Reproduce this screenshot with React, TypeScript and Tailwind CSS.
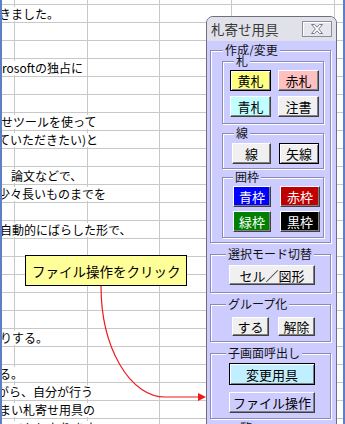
import React from "react";

const FONT = '"Noto Sans CJK JP", "Noto Sans", sans-serif';

type Row = { t?: string; cls?: string };

const rows: Row[] = [
  { t: "きました。", cls: "-ml-[3px]" },
  {},
  {},
  { t: "rosoftの独占に", cls: "ml-0" },
  {},
  {},
  { t: "せツールを使って", cls: "-ml-[1px]" },
  { t: "ていただきたい)と", cls: "-ml-[4px]" },
  {},
  { t: "論文などで、", cls: "ml-[9px]" },
  { t: "少々長いものまでを", cls: "-ml-[4px]" },
  {},
  { t: "自動的にばらした形で、", cls: "-ml-[2px]" },
  {},
  {},
  {},
  {},
  {},
  { t: "りする。", cls: "-ml-[2px]" },
  {},
  { t: "る。", cls: "-ml-[3px]" },
  { t: "がら、自分が行う", cls: "-ml-[5px]" },
  { t: "まい札寄せ用具の", cls: "-ml-[3px]" },
  { t: "ことになります。", cls: "ml-[10px]" },
];

function Cells({ text, cls }: { text?: string; cls?: string }) {
  return (
    <>
      <div className="w-[13px] h-full shrink-0 border-r border-[#c8c8c8] flex items-center">
        {text ? (
          <span
            className={`relative z-10 whitespace-nowrap bg-white text-[12px] leading-[14px] text-black ${cls ?? ""}`}
          >
            {text}
          </span>
        ) : null}
      </div>
      <div className="w-[73px] h-full shrink-0 border-r border-[#c8c8c8]" />
      <div className="w-[72px] h-full shrink-0 border-r border-[#c8c8c8]" />
      <div className="w-[72px] h-full shrink-0 border-r border-[#c8c8c8]" />
      <div className="w-[103px] h-full shrink-0 border-r border-[#c8c8c8]" />
      <div className="flex-1 h-full" />
    </>
  );
}

function Btn({
  children,
  className,
  def,
}: {
  children: React.ReactNode;
  className?: string;
  def?: boolean;
}) {
  const edge = def
    ? "border border-black shadow-[inset_1px_1px_0_#ffffff,inset_-1px_-1px_0_#808080]"
    : "border border-t-white border-l-white border-r-[#404040] border-b-[#404040] shadow-[inset_-1px_-1px_0_#808080]";
  return (
    <div
      className={`flex items-center justify-center text-[13px] leading-[13px] ${edge} ${className ?? ""}`}
    >
      {children}
    </div>
  );
}

function Group({
  label,
  className,
  labelCls,
  children,
}: {
  label: string;
  className?: string;
  labelCls?: string;
  children: React.ReactNode;
}) {
  return (
    <div
      className={`flex flex-col border border-[#8a8ab4] shadow-[inset_1px_1px_0_#ffffff,1px_1px_0_#ffffff] ${className ?? ""}`}
    >
      <span
        className={`-mt-[7px] self-start px-[2px] bg-[#ccccff] text-[12px] leading-[12px] text-[#111] ${labelCls ?? ""}`}
      >
        {label}
      </span>
      {children}
    </div>
  );
}

function CloseX() {
  return (
    <div className="w-[30px] h-[16px] border border-[#8c8ca0] bg-[#e6e6ee] shadow-[inset_1px_1px_0_#ffffff] flex items-center justify-center">
      <svg width="14" height="10" viewBox="0 0 14 10">
        <path
          d="M1.5 0.5 H4.5 L7 3.2 L9.5 0.5 H12.5 L8.6 5 L12.5 9.5 H9.5 L7 6.8 L4.5 9.5 H1.5 L5.4 5 Z"
          fill="#ffffff"
          stroke="#7a7a8c"
          strokeWidth="1"
          strokeLinejoin="round"
        />
      </svg>
    </div>
  );
}

export default function App() {
  return (
    <div
      className="relative w-[345px] h-[424px] overflow-hidden bg-white"
      style={{ fontFamily: FONT }}
    >
      <div className="flex h-full">
        <div className="w-[2px] h-full bg-[#5b80c6] shrink-0" />
        <div className="flex-1 h-full overflow-hidden flex flex-col">
          <div className="h-[5px] shrink-0 border-b border-[#c8c8c8] flex">
            <Cells />
          </div>
          {rows.map((r, i) => (
            <div key={i} className="h-[18px] shrink-0 border-b border-[#c8c8c8] flex">
              <Cells text={r.t} cls={r.cls} />
            </div>
          ))}
        </div>
        <div className="w-[2px] h-full bg-[#5b80c6] shrink-0" />
      </div>

      {/* callout */}
      <div className="absolute left-[25px] top-[255px] w-[162px] h-[31px] bg-[#ffff99] border border-black flex items-center pl-[6px]">
        <span className="text-[13.5px] leading-[16px] text-black whitespace-nowrap">
          ファイル操作をクリック
        </span>
      </div>

      {/* arrow */}
      <svg className="absolute left-0 top-0" width="345" height="424" viewBox="0 0 345 424">
        <path
          d="M101 286 A64 111 0 0 0 165 397 L199 397"
          fill="none"
          stroke="#f01818"
          strokeWidth="1.2"
        />
        <polygon points="198,393 206,397 198,401" fill="#f01818" />
      </svg>

      {/* floating tool window */}
      <div className="absolute left-[206px] top-[16px] w-[131px] h-[420px] rounded-t-[7px] border border-[#6e6e80] bg-[#ccccff] overflow-hidden flex flex-col">
        <div className="h-[24px] shrink-0 bg-[#e1e1ea] flex items-center justify-between pl-[4px] pr-[4px]">
          <span className="text-[13.5px] leading-[14px] text-[#3a3a3a]">札寄せ用具</span>
          <CloseX />
        </div>
        <div className="flex flex-col pl-[3px] pr-[5px]">
          <Group label="作成/変更" className="mt-[9px] pb-[4px]" labelCls="ml-[12px]">
            <Group label="札" className="mt-[5px] ml-[11px] mr-[6px]" labelCls="ml-[11px]">
              <div className="grid grid-cols-[41px_41px] gap-x-[7px] gap-y-[5px] pl-[7px] pt-[3px] pb-[6px]">
                <Btn def className="h-[21px] bg-[#ffff80]">黄札</Btn>
                <Btn className="h-[21px] bg-[#ffc0c0]">赤札</Btn>
                <Btn className="h-[21px] bg-[#c0ffff]">青札</Btn>
                <Btn className="h-[21px] bg-[#f0f0f0]">注書</Btn>
              </div>
            </Group>
            <Group label="線" className="mt-[9px] ml-[11px] mr-[6px]" labelCls="ml-[11px]">
              <div className="grid grid-cols-[39px_40px] gap-x-[8px] pl-[9px] pt-[4px] pb-[4px]">
                <Btn className="h-[21px] bg-[#f0f0f0]">線</Btn>
                <Btn def className="h-[21px] bg-[#f0f0f0]">矢線</Btn>
              </div>
            </Group>
            <Group label="囲枠" className="mt-[8px] ml-[11px] mr-[6px]" labelCls="ml-[10px]">
              <div className="grid grid-cols-[38px_40px] gap-x-[9px] gap-y-[4px] pl-[10px] pt-[3px] pb-[5px] text-white">
                <Btn className="h-[21px] bg-[#0000ff]">青枠</Btn>
                <Btn className="h-[21px] bg-[#c00000]">赤枠</Btn>
                <Btn className="h-[21px] bg-[#008000]">緑枠</Btn>
                <Btn className="h-[21px] bg-[#000000]">黒枠</Btn>
              </div>
            </Group>
          </Group>

          <Group label="選択モード切替" className="mt-[11px]" labelCls="ml-[15px]">
            <div className="pl-[18px] pt-[5px] pb-[7px]">
              <Btn className="w-[86px] h-[20px] bg-[#f0f0f0]">セル／図形</Btn>
            </div>
          </Group>

          <Group label="グループ化" className="mt-[11px]" labelCls="ml-[15px]">
            <div className="grid grid-cols-[37px_37px] gap-x-[9px] pl-[21px] pt-[7px] pb-[5px]">
              <Btn className="h-[19px] bg-[#f0f0f0]">する</Btn>
              <Btn className="h-[19px] bg-[#f0f0f0]">解除</Btn>
            </div>
          </Group>

          <Group label="子画面呼出し" className="mt-[11px]" labelCls="ml-[15px]">
            <div className="flex flex-col gap-[7px] pl-[18px] pt-[4px] pb-[5px]">
              <Btn def className="w-[86px] h-[22px] bg-[#c0f0ff]">変更用具</Btn>
              <Btn className="w-[86px] h-[21px] bg-[#ccccff]">ファイル操作</Btn>
            </div>
          </Group>

          <Group label="一覧" className="mt-[9px] h-[30px]" labelCls="ml-[15px]">
            <div />
          </Group>
        </div>
      </div>
    </div>
  );
}
